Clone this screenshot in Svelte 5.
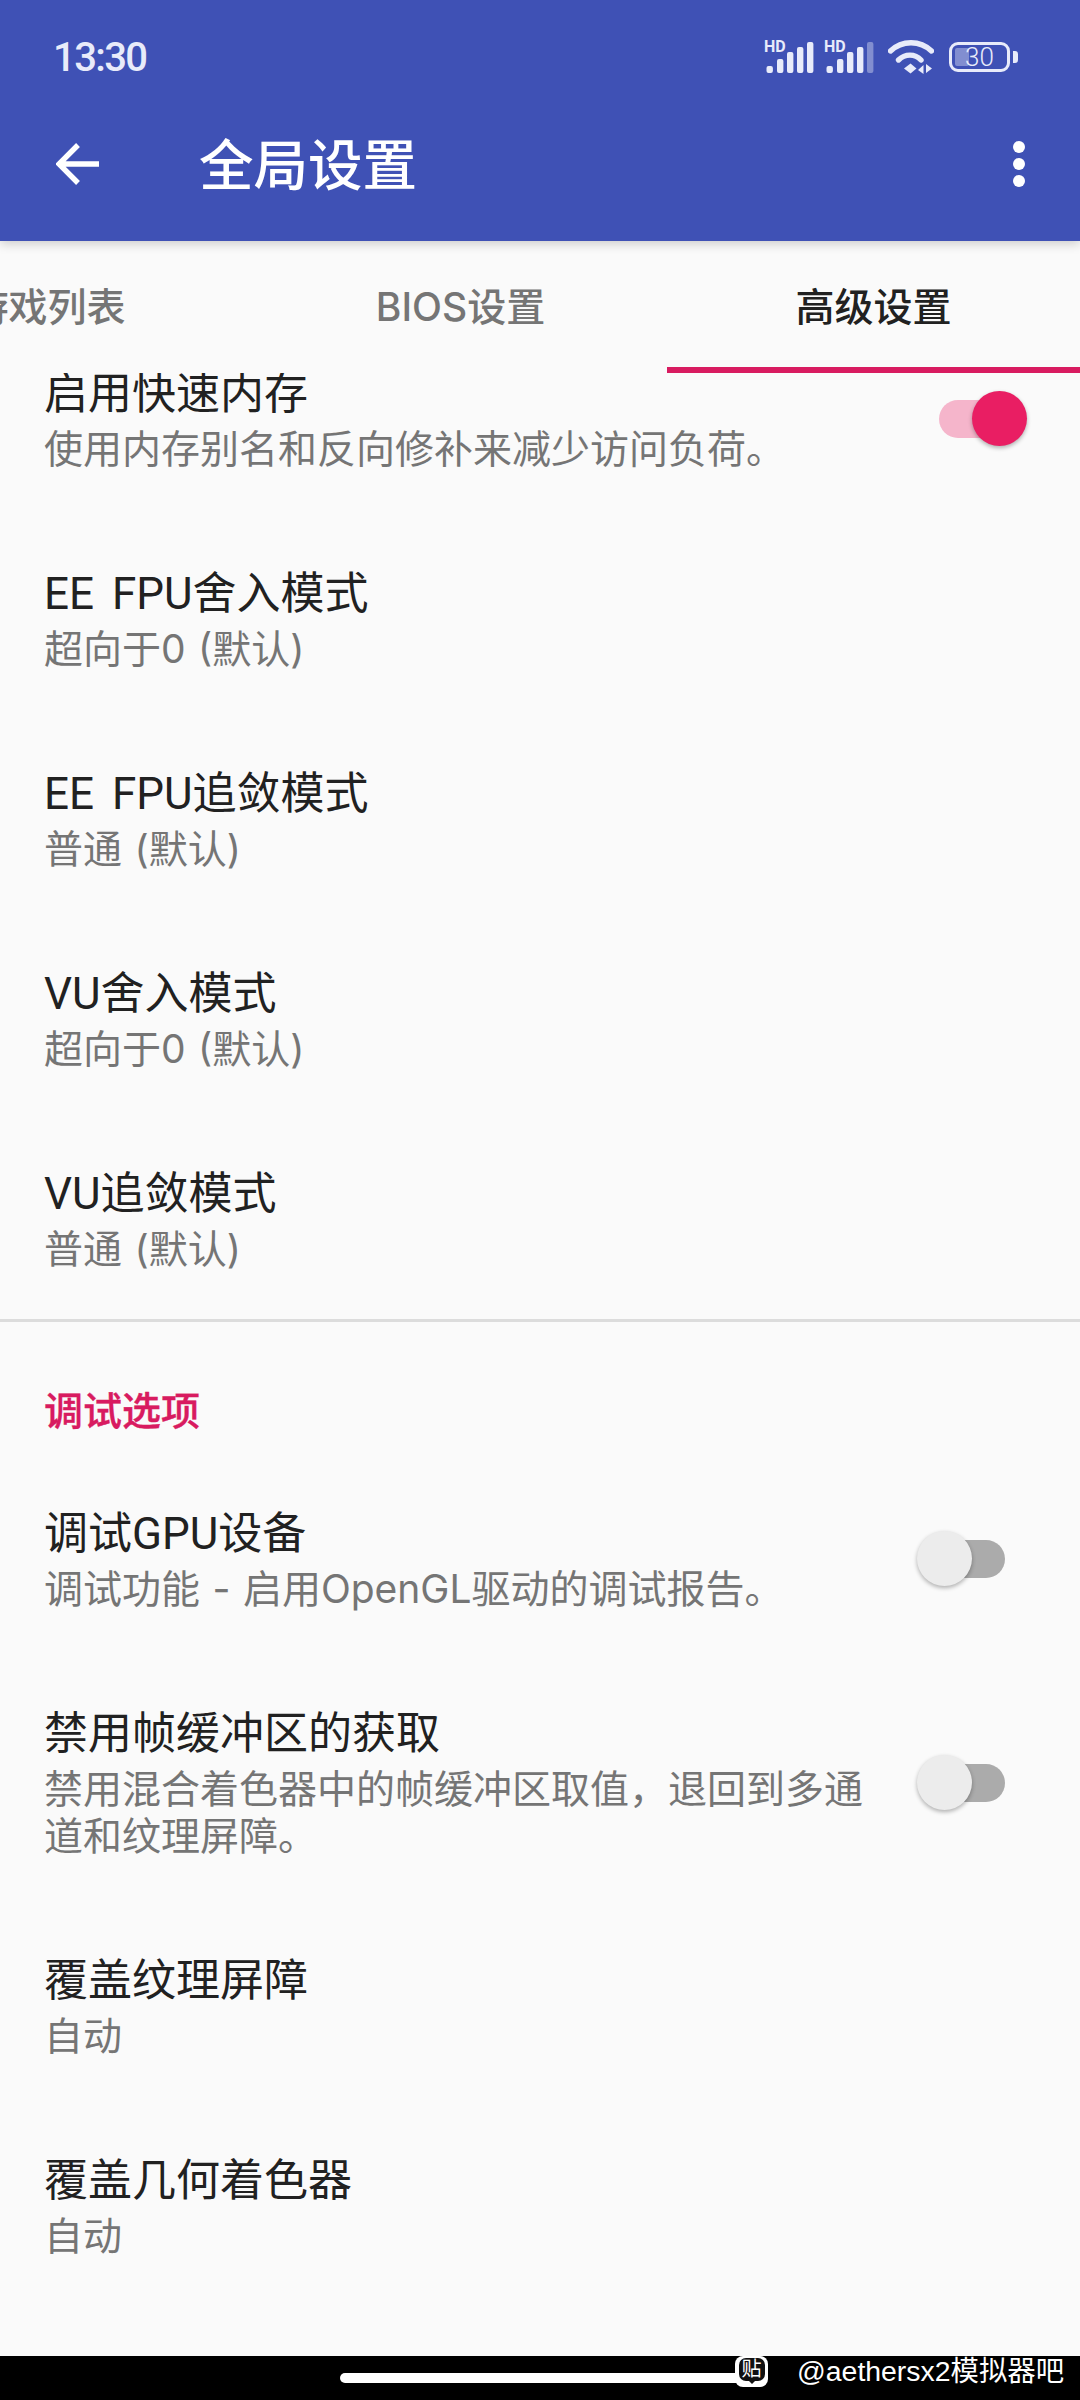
<script>
  const tabs = [
    { label: '游戏列表' },
    { label: 'BIOS设置' },
    { label: '高级设置', active: true }
  ];
  const firstGroup = [
    { title: '启用快速内存', sub: ['使用内存别名和反向修补来减少访问负荷。'], toggle: 'on' },
    { title: 'EE FPU舍入模式', sub: ['超向于0 (默认)'] },
    { title: 'EE FPU追敛模式', sub: ['普通 (默认)'] },
    { title: 'VU舍入模式', sub: ['超向于0 (默认)'] },
    { title: 'VU追敛模式', sub: ['普通 (默认)'] }
  ];
  const secondGroup = [
    { title: '调试GPU设备', sub: ['调试功能 - 启用OpenGL驱动的调试报告。'], toggle: 'off' },
    { title: '禁用帧缓冲区的获取', sub: ['禁用混合着色器中的帧缓冲区取值，退回到多通', '道和纹理屏障。'], toggle: 'off' },
    { title: '覆盖纹理屏障', sub: ['自动'] },
    { title: '覆盖几何着色器', sub: ['自动'] }
  ];
  const bars = [
    { x: 2.5, y: 25, h: 7 },
    { x: 13, y: 18, h: 14 },
    { x: 23, y: 11, h: 21 },
    { x: 33, y: 6, h: 26 },
    { x: 43, y: 1, h: 31 }
  ];
</script>

{#snippet signal(dim)}
  <svg class="signal" width="52" height="34" viewBox="0 0 52 34">
    <text x="0" y="12" class="hd">HD</text>
    {#each bars as b, i}
      <rect x={b.x} y={b.y + 1} width="6.4" height={b.h} rx="2" fill="#e8ebfa" opacity={dim && i === 4 ? 0.4 : 1} />
    {/each}
  </svg>
{/snippet}

{#snippet row(item)}
  <div class="row">
    <div class="text">
      <div class="title">{item.title}</div>
      {#each item.sub as line}
        <div class="sub">{line}</div>
      {/each}
    </div>
    {#if item.toggle}
      <div class="switch" class:on={item.toggle === 'on'}>
        <span class="track"></span>
        <span class="thumb"></span>
      </div>
    {/if}
  </div>
{/snippet}

<div class="page">
  <header class="header">
    <div class="status">
      <span class="time">13:30</span>
      <div class="status-icons">
        {@render signal(false)}
        {@render signal(true)}
        <svg class="wifi" width="46" height="34" viewBox="0 0 46 34" fill="none">
          <path d="M2.5 11 C14 0 32 0 43.5 11" stroke="#e8ebfa" stroke-width="5.4" stroke-linecap="round" />
          <path d="M10.5 20 C17 13.5 27 13.5 33 20" stroke="#e8ebfa" stroke-width="5.4" stroke-linecap="round" />
          <path d="M16 28.5 L22.5 23.5 L28.5 28.5 L22.5 33.5 Z" fill="#e8ebfa" />
          <path d="M30 30 L35.5 25 L35.5 34 Z M38 24 L38 33 L44 28.5 Z" fill="#e8ebfa" />
        </svg>
        <div class="battery">
          <div class="cell">
            <span class="charge"></span>
            <span class="level">30</span>
          </div>
          <span class="cap"></span>
        </div>
      </div>
    </div>
    <div class="toolbar">
      <svg class="back" width="44" height="44" viewBox="0 0 44 44" fill="none">
        <path d="M43 22 H3 M22 3 L3 22 L22 41" stroke="#fff" stroke-width="5.4" />
      </svg>
      <h1 class="heading">全局设置</h1>
      <div class="dots"><i></i><i></i><i></i></div>
    </div>
  </header>

  <nav class="tabs">
    {#each tabs as tab}
      <div class="tab" class:active={tab.active}>{tab.label}</div>
    {/each}
  </nav>

  <main class="list">
    {#each firstGroup as item}
      {@render row(item)}
    {/each}
    <div class="divider"></div>
    <div class="section">调试选项</div>
    {#each secondGroup as item}
      {@render row(item)}
    {/each}
  </main>

  <footer class="nav">
    <span class="pill"></span>
    <span class="badge"><span class="badge-inner">贴</span></span>
    <span class="mark">@aethersx2模拟器吧</span>
  </footer>
</div>

<style>
  :global(body) {
    margin: 0;
    background: #fafafa;
  }
  .page {
    width: 1080px;
    height: 2400px;
    display: flex;
    flex-direction: column;
    overflow: hidden;
    background: #fafafa;
    font-family: Inter, "Noto Sans CJK SC", sans-serif;
  }
  .header {
    position: relative;
    z-index: 3;
    height: 241px;
    flex: none;
    background: #3f51b5;
    box-shadow: 0 3px 10px rgba(0, 0, 0, 0.18);
  }
  .status {
    height: 87px;
    box-sizing: border-box;
    padding: 27px 62px 0 53px;
    display: flex;
    align-items: center;
    justify-content: space-between;
  }
  .time {
    color: #e8ebfa;
    font-family: Roboto, sans-serif;
    font-size: 40px;
    font-weight: 500;
    letter-spacing: -1.6px;
  }
  .status-icons {
    display: flex;
    align-items: center;
    gap: 8px;
  }
  .signal {
    display: block;
  }
  .hd {
    font-family: Roboto, sans-serif;
    font-size: 16px;
    font-weight: 700;
    fill: #e8ebfa;
  }
  .wifi {
    display: block;
    margin-left: 4px;
  }
  .battery {
    display: flex;
    align-items: center;
    gap: 3px;
    margin-left: 7px;
  }
  .cell {
    position: relative;
    width: 61px;
    height: 30px;
    box-sizing: border-box;
    border: 3px solid #e8ebfa;
    border-radius: 9px;
    display: flex;
    align-items: center;
    justify-content: center;
  }
  .charge {
    position: absolute;
    left: 3px;
    top: 3px;
    bottom: 3px;
    width: 14px;
    border-radius: 2px;
    background: rgba(232, 235, 250, 0.4);
  }
  .level {
    position: relative;
    color: #e8ebfa;
    font-family: Roboto, sans-serif;
    font-size: 26px;
    line-height: 24px;
    font-weight: 300;
  }
  .cap {
    width: 5px;
    height: 12px;
    border-radius: 0 3px 3px 0;
    background: #e8ebfa;
  }
  .toolbar {
    height: 154px;
    display: flex;
    align-items: center;
    padding: 0 55px 0 56px;
  }
  .back {
    flex: none;
  }
  .heading {
    margin: 0 0 0 99px;
    flex: 1;
    color: #fff;
    font-size: 54.5px;
    font-weight: 500;
    line-height: 64px;
    padding-top: 2px;
  }
  .dots {
    display: flex;
    flex-direction: column;
    gap: 5px;
  }
  .dots i {
    width: 12px;
    height: 12px;
    border-radius: 50%;
    background: #fff;
  }
  .tabs {
    position: relative;
    z-index: 2;
    height: 132px;
    flex: none;
    display: flex;
    margin-left: -159px;
    background: #fafafa;
  }
  .tab {
    flex: none;
    width: 413px;
    box-sizing: border-box;
    display: flex;
    align-items: center;
    justify-content: center;
    color: #757575;
    font-size: 39px;
    font-weight: 500;
    border-bottom: 6px solid transparent;
  }
  .tab.active {
    color: #212121;
    border-bottom-color: #d81b60;
  }
  .list {
    flex: 1;
    min-height: 0;
    margin-top: -56px;
    position: relative;
    z-index: 1;
  }
  .row {
    display: flex;
    align-items: center;
    padding: 44.5px 53px 44.5px 44px;
  }
  .text {
    flex: 1;
    min-width: 0;
  }
  .title {
    color: #212121;
    font-family: Roboto, "Noto Sans CJK SC", sans-serif;
    font-size: 44px;
    line-height: 64px;
    word-spacing: 7px;
  }
  .sub {
    color: #757575;
    font-size: 39px;
    line-height: 47px;
    white-space: nowrap;
    word-spacing: 1.5px;
    position: relative;
    top: -1px;
  }
  .switch {
    position: relative;
    flex: none;
    width: 110px;
    height: 56px;
    margin: 4px 0 0 -110px;
  }
  .track {
    position: absolute;
    left: 22px;
    top: 9px;
    width: 66px;
    height: 38px;
    border-radius: 19px;
    background: #ababab;
  }
  .thumb {
    position: absolute;
    left: 0;
    top: 0;
    width: 55px;
    height: 55px;
    border-radius: 50%;
    background: #ececec;
    box-shadow: 0 2px 4px rgba(0, 0, 0, 0.3);
  }
  .switch.on .track {
    background: #f5b5cb;
  }
  .switch.on .thumb {
    left: 55px;
    background: #e91e63;
  }
  .divider {
    height: 3px;
    margin-top: 2px;
    background: #dcdcdc;
  }
  .section {
    color: #d81b60;
    font-size: 39px;
    font-weight: 500;
    line-height: 48px;
    padding: 65px 44px 22px;
    -webkit-text-stroke: 0.35px #d81b60;
  }
  .nav {
    position: relative;
    z-index: 3;
    height: 44px;
    flex: none;
    background: #000;
    display: flex;
    align-items: flex-start;
    padding-left: 340px;
  }
  .pill {
    width: 400px;
    height: 10px;
    margin-top: 17px;
    border-radius: 5px 0 0 5px;
    background: #fff;
  }
  .badge {
    width: 33px;
    height: 31px;
    margin-left: -5px;
    border-radius: 8px;
    background: #fff;
    display: flex;
    justify-content: center;
    padding-top: 2px;
    box-sizing: border-box;
  }
  .badge-inner {
    position: relative;
    width: 26px;
    height: 23px;
    border-radius: 7px;
    background: #111;
    color: #fff;
    font-size: 20px;
    line-height: 23px;
    text-align: center;
  }
  .badge-inner::after {
    content: "";
    position: absolute;
    left: 9px;
    top: 22px;
    border: 4px solid transparent;
    border-top-color: #111;
  }
  .mark {
    margin-left: 29px;
    margin-top: -2px;
    color: #fff;
    font-family: "Liberation Sans", "Noto Sans CJK SC", sans-serif;
    font-size: 28.4px;
    line-height: 34px;
    white-space: nowrap;
  }
</style>
